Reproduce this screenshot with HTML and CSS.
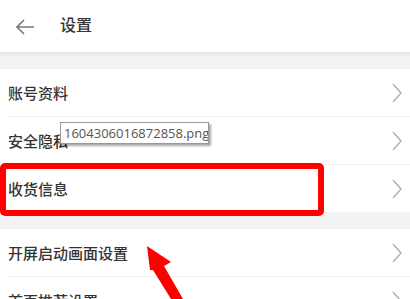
FILE: index.html
```
<!DOCTYPE html>
<html lang="zh">
<head>
<meta charset="utf-8">
<link rel="stylesheet" href="styles.css">
</head>
<body>
<div class="page">
  <header class="header">
    <svg class="back" width="20" height="16" viewBox="0 0 20 16"><path d="M19 8H2M9 1L2 8l7 7" fill="none" stroke="#777" stroke-width="1.6"/></svg>
    <span class="title">设置</span>
  </header>
  <div class="band"></div>
  <div class="group">
    <div class="row"><span>账号资料</span><svg class="chev" width="10" height="20" viewBox="0 0 10 20"><path d="M1 1l8 9-8 9" fill="none" stroke="#aaa" stroke-width="1.3"/></svg></div>
    <div class="row"><span>安全隐私</span><svg class="chev" width="10" height="20" viewBox="0 0 10 20"><path d="M1 1l8 9-8 9" fill="none" stroke="#aaa" stroke-width="1.3"/></svg></div>
    <div class="row last"><span>收货信息</span><svg class="chev" width="10" height="20" viewBox="0 0 10 20"><path d="M1 1l8 9-8 9" fill="none" stroke="#aaa" stroke-width="1.3"/></svg></div>
  </div>
  <div class="band flat"></div>
  <div class="group">
    <div class="row"><span>开屏启动画面设置</span><svg class="chev" width="10" height="20" viewBox="0 0 10 20"><path d="M1 1l8 9-8 9" fill="none" stroke="#aaa" stroke-width="1.3"/></svg></div>
    <div class="row"><span>首页推荐设置</span><svg class="chev" width="10" height="20" viewBox="0 0 10 20"><path d="M1 1l8 9-8 9" fill="none" stroke="#aaa" stroke-width="1.3"/></svg></div>
  </div>
  <div class="highlight"></div>
  <div class="tooltip">1604306016872858.png</div>
  <svg class="pointer" width="60" height="64" viewBox="0 0 60 64"><polygon points="17,11 41,27 34,31 53,64 41,64 23,35 20,35" fill="#f00"/></svg>
</div>
</body>
</html>
```
FILE: styles.css
```
html, body {
  margin: 0;
  padding: 0;
  background: #fff;
  overflow: hidden;
}
.page {
  position: relative;
  width: 410px;
  height: 299px;
  overflow: hidden;
  font-family: "Noto Sans CJK SC", "Noto Sans", sans-serif;
  color: #333;
}
.header {
  height: 52px;
  display: flex;
  align-items: center;
  background: #fff;
}
.back {
  margin-left: 15px;
  margin-top: 2px;
}
.title {
  margin-left: 25px;
  font-size: 16px;
  font-weight: 500;
  color: #333;
  margin-top: -4px;
}
.band {
  height: 17px;
  background: linear-gradient(#e4e4e4, #f2f2f2 5px, #f3f3f3);
}
.band.flat {
  background: #f3f3f3;
}
.group {
  background: #fff;
}
.row {
  height: 47px;
  display: flex;
  align-items: center;
  justify-content: space-between;
  margin-left: 8px;
  padding-right: 8px;
  border-bottom: 1px solid #eeeeee;
  font-size: 15px;
  font-weight: 500;
  color: #333;
}
.row.last {
  border-bottom: none;
}
.chev {
  display: block;
}
.highlight {
  position: absolute;
  left: 0;
  top: 163px;
  width: 312px;
  height: 41px;
  border: 6px solid #f00;
  border-radius: 5px;
}
.tooltip {
  position: absolute;
  left: 60px;
  top: 122px;
  width: 149px;
  height: 22px;
  box-sizing: border-box;
  background: #fff;
  border: 1px solid #999;
  box-shadow: 2px 2px 2px rgba(0,0,0,0.35);
  font-family: "Open Sans", "Liberation Sans", sans-serif;
  font-size: 13px;
  line-height: 20px;
  padding-left: 3px;
  color: #555;
  white-space: nowrap;
  overflow: hidden;
}
.pointer {
  position: absolute;
  left: 130px;
  top: 235px;
}
```
